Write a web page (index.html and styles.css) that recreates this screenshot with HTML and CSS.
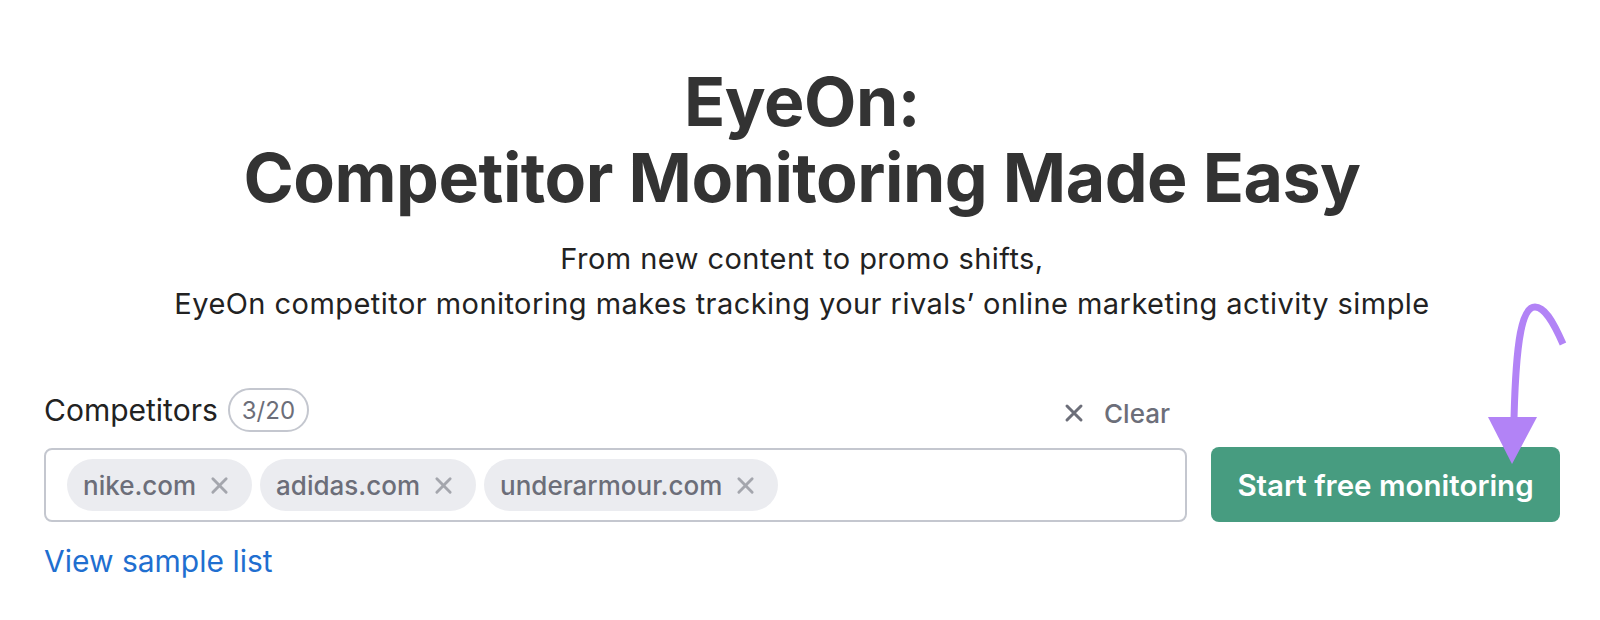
FILE: index.html
```html
<!DOCTYPE html>
<html lang="en">
<head>
    <meta charset="UTF-8">
    <meta name="viewport" content="width=device-width, initial-scale=1.0">
    <title>EyeOn: Competitor Monitoring Made Easy</title>
    <link rel="stylesheet" href="styles.css">
</head>
<body>
    <main class="hero">
        <h1 class="title">EyeOn:<br>Competitor Monitoring Made Easy</h1>
        <p class="lead">From new content to promo shifts,<br>EyeOn competitor monitoring makes tracking your rivals’ online marketing activity simple</p>

        <section class="form">
            <div class="form-head">
                <label class="label">Competitors <span class="count">3/20</span></label>
                <button class="clear">
                    <svg width="20" height="20" viewBox="0 0 20 20"><path d="M3 3 L17 17 M17 3 L3 17" stroke="currentColor" stroke-width="3" stroke-linecap="round"/></svg>
                    Clear
                </button>
            </div>
            <div class="form-row">
                <div class="domains">
                    <span class="chip">nike.com <svg class="chip-x" width="19" height="19" viewBox="0 0 20 20"><path d="M3 3 L17 17 M17 3 L3 17" stroke="currentColor" stroke-width="3" stroke-linecap="round"/></svg></span>
                    <span class="chip">adidas.com <svg class="chip-x" width="19" height="19" viewBox="0 0 20 20"><path d="M3 3 L17 17 M17 3 L3 17" stroke="currentColor" stroke-width="3" stroke-linecap="round"/></svg></span>
                    <span class="chip">underarmour.com <svg class="chip-x" width="19" height="19" viewBox="0 0 20 20"><path d="M3 3 L17 17 M17 3 L3 17" stroke="currentColor" stroke-width="3" stroke-linecap="round"/></svg></span>
                </div>
                <button class="start">Start free monitoring</button>

                <!-- annotation arrow pointing at the button -->
                <svg class="arrow" width="100" height="170" viewBox="0 0 100 170">
                    <path d="M83 45 C72 20 64 8 55 8 C42 8 36 40 34 120" fill="none" stroke="#b283f6" stroke-width="7"/>
                    <polygon points="8,118 57,118 32,165" fill="#b283f6"/>
                </svg>
            </div>
            <a class="sample" href="#">View sample list</a>
        </section>
    </main>
</body>
</html>
```

FILE: styles.css
```css
body {
    margin: 0;
    background-color: #fff;
    font-family: Inter, "Noto Sans", sans-serif;
    color: #222;
}
.hero {
    display: flex;
    flex-direction: column;
    align-items: center;
    padding: 63px 40px 0 44px;
}
.title {
    margin: 0;
    font-size: 68px;
    line-height: 76px;
    font-weight: 700;
    color: #333;
    text-align: center;
    letter-spacing: -0.5px;
}
.lead {
    margin: 21px 0 0;
    font-size: 29px;
    line-height: 45px;
    letter-spacing: 0.45px;
    text-align: center;
    color: #222;
}
.form {
    align-self: stretch;
    margin-top: 62px;
}
.form-head {
    display: flex;
    align-items: center;
    justify-content: space-between;
    width: calc(100% - 373px);
    height: 44px;
    margin-bottom: 15px;
}
.label {
    display: flex;
    align-items: center;
    gap: 10px;
    font-size: 30px;
}
.count {
    border: 2px solid #c4c7cf;
    border-radius: 22px;
    padding: 0 12px;
    height: 40px;
    display: flex;
    align-items: center;
    font-size: 24px;
    color: #6c6e79;
}
.clear {
    display: flex;
    align-items: center;
    gap: 20px;
    background: none;
    border: none;
    padding: 6px 17px 0 0;
    font-family: inherit;
    font-size: 26px;
    font-weight: 500;
    color: #6c6e79;
}
.form-row {
    position: relative;
    display: flex;
    align-items: flex-end;
    gap: 24px;
}
.domains {
    flex: 1;
    display: flex;
    align-items: center;
    gap: 8px;
    height: 70px;
    padding: 0 21px;
    border: 2px solid #c4c7cf;
    border-radius: 8px;
}
.chip {
    display: flex;
    align-items: center;
    gap: 14px;
    height: 52px;
    padding: 0 23px 0 16px;
    border-radius: 26px;
    background-color: #ebecf0;
    font-size: 26px;
    font-weight: 500;
    color: #6c6e79;
}
.chip-x {
    color: #a4a6ad;
}
.start {
    width: 349px;
    height: 75px;
    border: none;
    border-radius: 8px;
    background-color: #479c80;
    color: #fff;
    font-family: inherit;
    font-size: 29.5px;
    font-weight: 600;
}
.sample {
    display: inline-block;
    margin-top: 21px;
    font-size: 30px;
    line-height: 36px;
    color: #1f6fd0;
    text-decoration: none;
}
.arrow {
    position: absolute;
    right: -20px;
    top: -148px;
}
```
